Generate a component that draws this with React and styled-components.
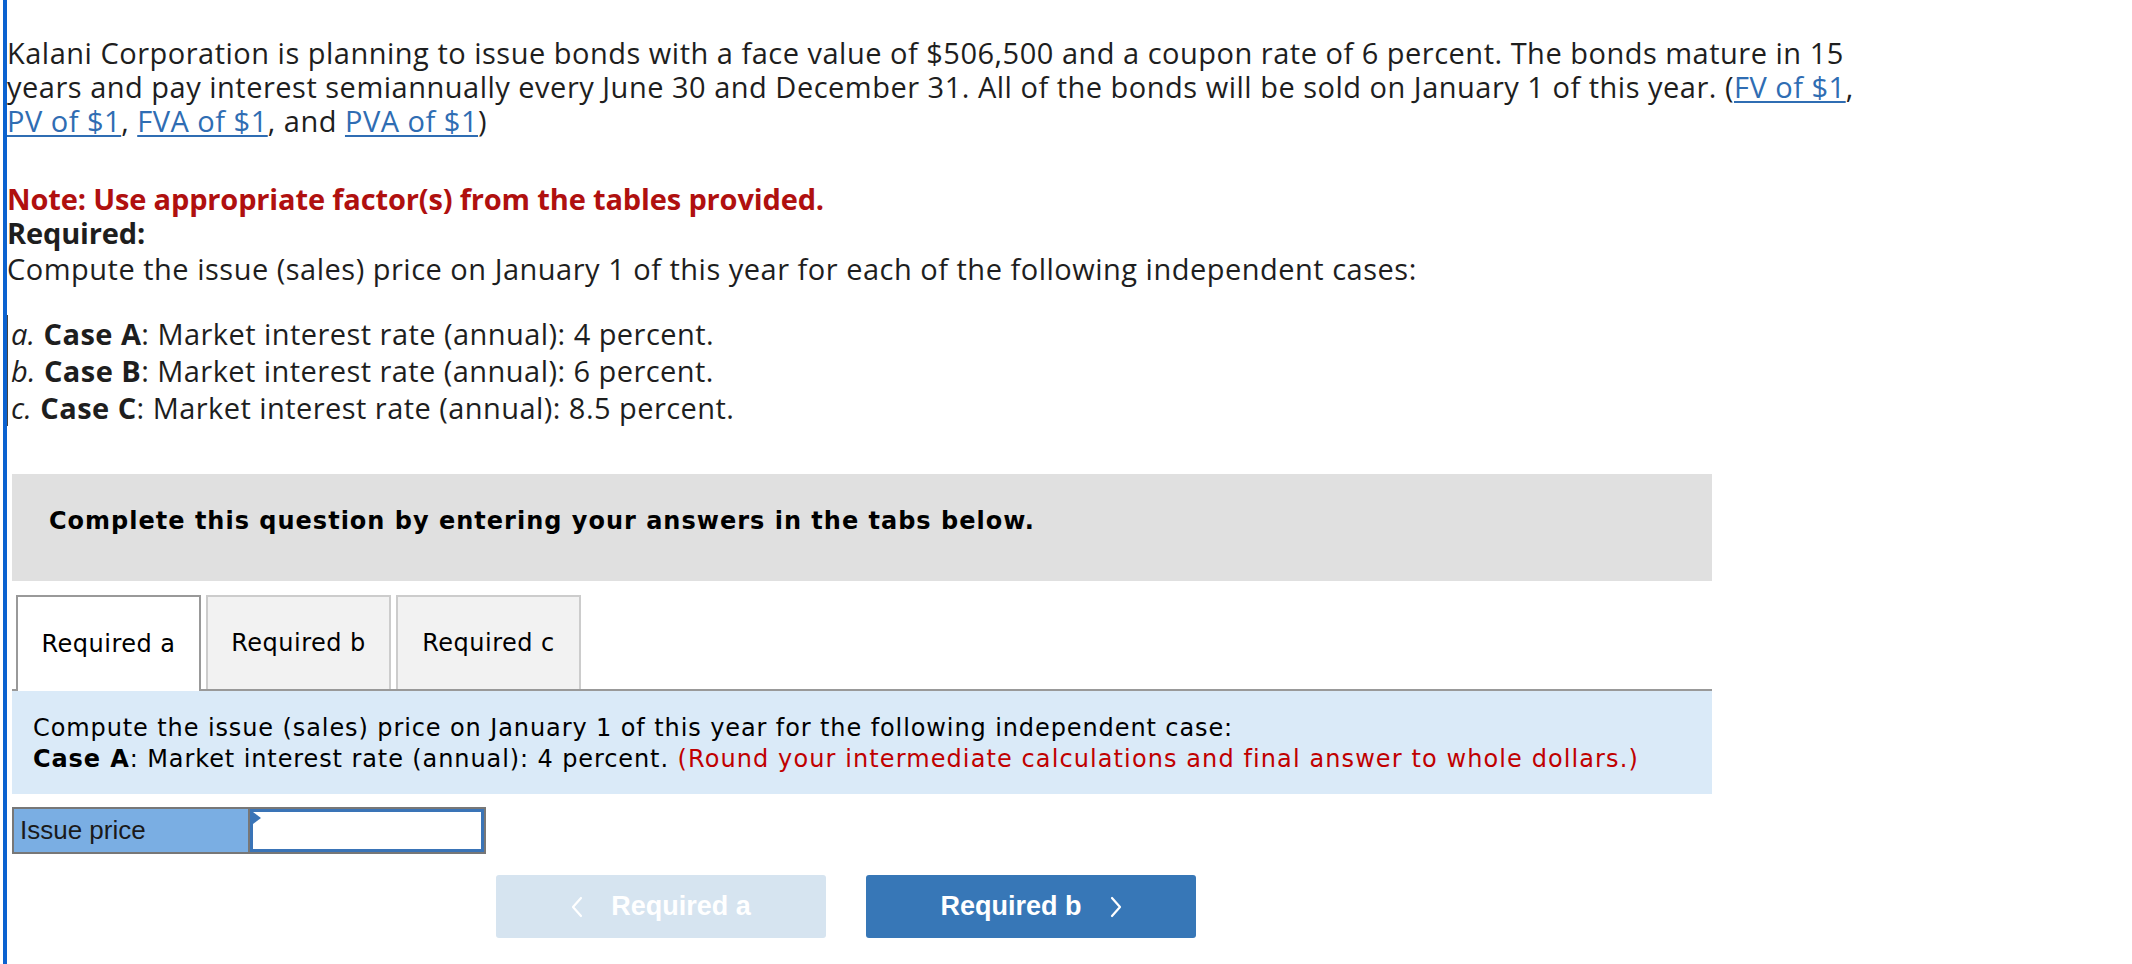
import React from 'react';
import styled, { createGlobalStyle } from 'styled-components';

const GlobalStyle = createGlobalStyle`
  html, body {
    margin: 0;
    padding: 0;
    background: #ffffff;
  }
`;

const Page = styled.div`
  margin-left: 3px;
  border-left: 4px solid #0b62d0;
  min-height: 964px;
  box-sizing: border-box;
  padding-top: 36px;
  color: #1e1e1e;
  font-family: "Open Sans", Lato, sans-serif;
`;

const Para = styled.p`
  margin: 0;
  font-size: 29px;
  line-height: 34px;
  letter-spacing: 0.5px;
`;

const Link = styled.a`
  color: #2f6db3;
  text-decoration: underline;
  text-underline-offset: 3px;
`;

const Note = styled.div`
  margin-top: 44px;
  font-size: 29px;
  line-height: 34px;
  font-weight: 700;
  letter-spacing: -0.15px;
  color: #b0100f;
`;

const Heading = styled.div`
  font-size: 29px;
  line-height: 34px;
  font-weight: 700;
  letter-spacing: -0.15px;
  color: #1e1e1e;
`;

const Sub = styled.div`
  font-size: 29px;
  line-height: 37px;
  letter-spacing: 0.5px;
`;

const CaseList = styled.div`
  margin-top: 28px;
  border-left: 1px solid #444;
  padding-left: 3px;
  font-size: 29px;
  line-height: 37px;
  letter-spacing: 0.45px;
`;

const Work = styled.div`
  margin-top: 48px;
  width: 1700px;
  padding-left: 5px;
  font-family: "DejaVu Sans", Verdana, sans-serif;
`;

const Banner = styled.div`
  height: 107px;
  background: #e0e0e0;
  display: flex;
  align-items: center;
  padding: 0 0 14px 37px;
  box-sizing: border-box;
  font-weight: 700;
  font-size: 24px;
  letter-spacing: 1px;
  color: #000;
`;

const Tabs = styled.div`
  margin-top: 14px;
  display: flex;
  gap: 5px;
  padding-left: 4px;
  border-bottom: 2px solid #999;
`;

const Tab = styled.div`
  width: 185px;
  box-sizing: border-box;
  display: flex;
  align-items: center;
  justify-content: center;
  font-size: 24px;
  letter-spacing: 0.5px;
  color: #000;
  background: ${p => (p.active ? '#ffffff' : '#f2f2f2')};
  border: 2px solid ${p => (p.active ? '#999' : '#ccc')};
  border-bottom: none;
  margin-bottom: ${p => (p.active ? '-2px' : '0')};
  height: ${p => (p.active ? '96px' : '94px')};
`;

const Panel = styled.div`
  background: #daeaf8;
  padding: 22px 21px 19px;
  font-size: 24px;
  letter-spacing: 0.9px;
  line-height: 31px;
  color: #000;
`;

const Red = styled.span`
  color: #c00000;
  letter-spacing: 1.1px;
`;

const AnswerRow = styled.div`
  margin-top: 13px;
  display: flex;
  width: max-content;
  border: 2px solid #777;
  font-family: "Liberation Sans", Arial, sans-serif;
`;

const Label = styled.div`
  width: 236px;
  height: 43px;
  box-sizing: border-box;
  background: #7aaee3;
  border-right: 2px solid #777;
  display: flex;
  align-items: center;
  padding-left: 6px;
  font-size: 26px;
  color: #1a1a1a;
`;

const InputCell = styled.div`
  position: relative;
  width: 234px;
  height: 43px;
  box-sizing: border-box;
  border: 3px solid #3a74b7;
  background: #fff;
`;

const Marker = styled.div`
  position: absolute;
  left: 0;
  top: 0;
  width: 0;
  height: 0;
  border-top: 6px solid transparent;
  border-bottom: 6px solid transparent;
  border-left: 8px solid #3a74b7;
`;

const ButtonRow = styled.div`
  margin-top: 21px;
  display: flex;
  gap: 40px;
  padding-left: 484px;
`;

const NavButton = styled.div`
  width: 330px;
  height: 63px;
  border-radius: 3px;
  display: flex;
  align-items: center;
  justify-content: center;
  gap: 28px;
  font-family: "Liberation Sans", Arial, sans-serif;
  font-weight: 700;
  font-size: 27px;
  color: #fff;
  background: ${p => (p.disabled ? '#d6e4f0' : '#3777b7')};
`;

const Chevron = ({ dir }) => (
  <svg width="12" height="22" viewBox="0 0 12 22" fill="none">
    <path
      d={dir === 'left' ? 'M10 2 L2 11 L10 20' : 'M2 2 L10 11 L2 20'}
      stroke="#fff"
      strokeWidth="2.2"
      strokeLinecap="round"
      strokeLinejoin="round"
    />
  </svg>
);

export default function App() {
  return (
    <>
      <GlobalStyle />
      <Page>
        <Para>
          Kalani Corporation is planning to issue bonds with a face value of $506,500 and a coupon rate of 6 percent. The bonds mature in 15
          <br />
          years and pay interest semiannually every June 30 and December 31. All of the bonds will be sold on January 1 of this year. (<Link>FV of $1</Link>,
          <br />
          <Link>PV of $1</Link>, <Link>FVA of $1</Link>, and <Link>PVA of $1</Link>)
        </Para>
        <Note>Note: Use appropriate factor(s) from the tables provided.</Note>
        <Heading>Required:</Heading>
        <Sub>Compute the issue (sales) price on January 1 of this year for each of the following independent cases:</Sub>
        <CaseList>
          <div><i>a.</i> <b>Case A</b>: Market interest rate (annual): 4 percent.</div>
          <div><i>b.</i> <b>Case B</b>: Market interest rate (annual): 6 percent.</div>
          <div><i>c.</i> <b>Case C</b>: Market interest rate (annual): 8.5 percent.</div>
        </CaseList>
        <Work>
          <Banner>Complete this question by entering your answers in the tabs below.</Banner>
          <Tabs>
            <Tab active>Required a</Tab>
            <Tab>Required b</Tab>
            <Tab>Required c</Tab>
          </Tabs>
          <Panel>
            Compute the issue (sales) price on January 1 of this year for the following independent case:
            <br />
            <b>Case A</b>: Market interest rate (annual): 4 percent. <Red>(Round your intermediate calculations and final answer to whole dollars.)</Red>
          </Panel>
          <AnswerRow>
            <Label>Issue price</Label>
            <InputCell>
              <Marker />
            </InputCell>
          </AnswerRow>
          <ButtonRow>
            <NavButton disabled>
              <Chevron dir="left" />
              Required a
            </NavButton>
            <NavButton>
              Required b
              <Chevron dir="right" />
            </NavButton>
          </ButtonRow>
        </Work>
      </Page>
    </>
  );
}
